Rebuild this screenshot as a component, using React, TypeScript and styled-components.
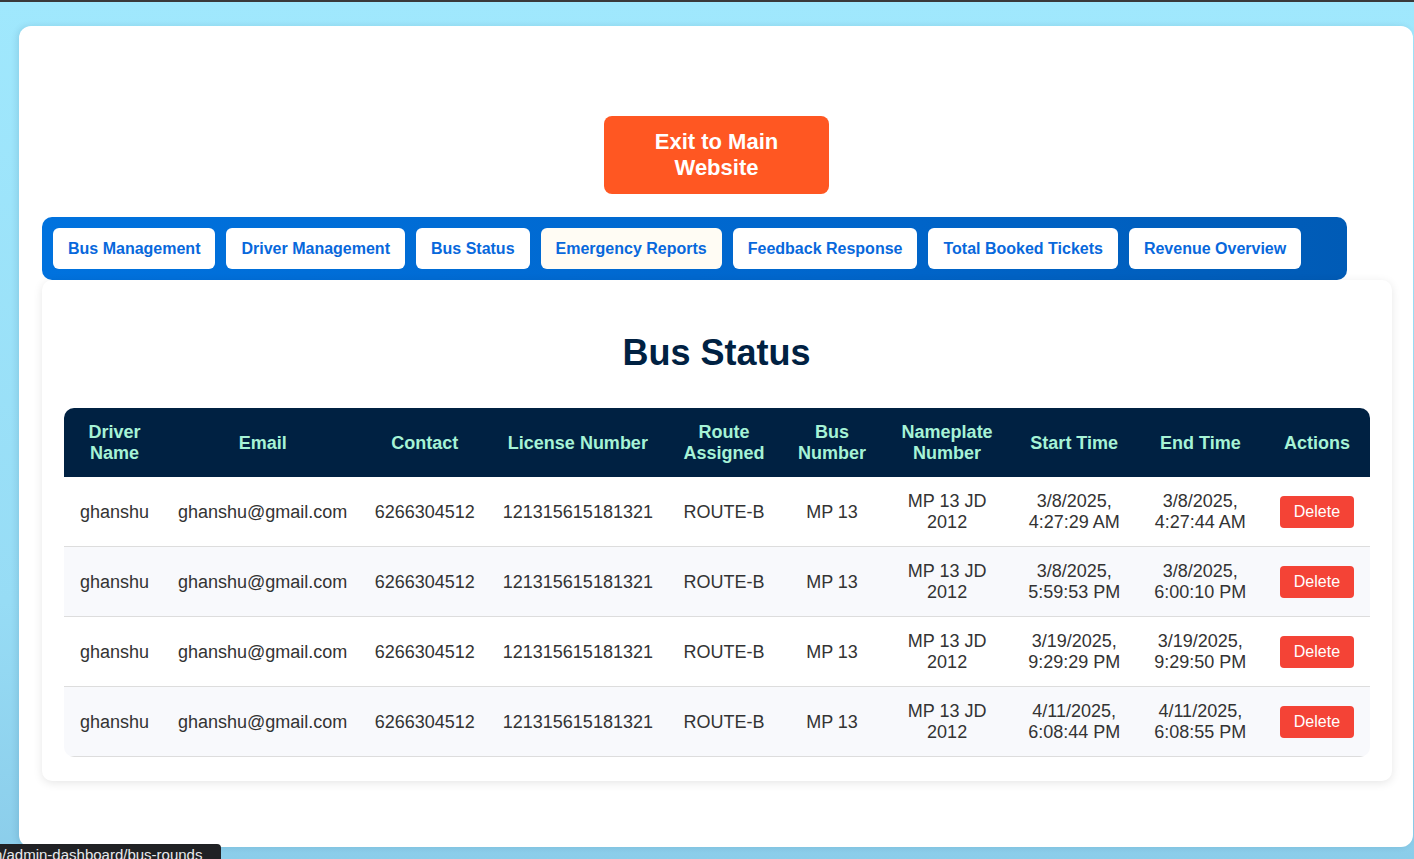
import React from 'react';
import styled, { createGlobalStyle } from 'styled-components';

const GlobalStyle = createGlobalStyle`
	html, body {
		margin: 0;
		padding: 0;
	}
	body {
		font-family: "Liberation Sans", Arial, sans-serif;
		background: linear-gradient(180deg, #a0e8fd 0%, #97dcf5 70%, #8bcdea 100%);
		min-height: 859px;
		border-top: 2px solid #3a3a3a;
		box-sizing: border-box;
	}
`;

const Page = styled.div`
	padding: 24px 1px 12px 19px;
`;

const Panel = styled.div`
	background: #ffffff;
	border-radius: 12px;
	box-shadow: -2px 0 6px rgba(0, 60, 90, 0.12);
	padding: 90px 22px 66px 23px;
	display: flex;
	flex-direction: column;
	align-items: center;
`;

const ExitButton = styled.button`
	width: 225px;
	height: 78px;
	border: none;
	border-radius: 8px;
	background: #ff5722;
	color: #ffffff;
	font-family: inherit;
	font-size: 22px;
	font-weight: bold;
	line-height: 26px;
	cursor: pointer;
	margin-bottom: 23px;
`;

const Nav = styled.nav`
	align-self: flex-start;
	width: 1305px;
	box-sizing: border-box;
	display: flex;
	gap: 11px;
	padding: 11px;
	background: linear-gradient(90deg, #0072de 0%, #0066cc 60%, #005bb6 100%);
	border-radius: 10px;
`;

const NavButton = styled.button<{ $hovered?: boolean }>`
	height: 41px;
	padding: 0 15px;
	border: none;
	border-radius: 6px;
	background: ${p => (p.$hovered ? '#fffcf4' : '#ffffff')};
	color: #0868dc;
	font-family: inherit;
	font-size: 16px;
	font-weight: bold;
	white-space: nowrap;
	cursor: pointer;
`;

const Card = styled.section`
	width: 1350px;
	box-sizing: border-box;
	background: #ffffff;
	border-radius: 10px;
	box-shadow: 0 2px 10px rgba(0, 0, 0, 0.1);
	padding: 0 22px 24px 22px;
`;

const Title = styled.h2`
	margin: 0;
	padding: 52px 0 35px;
	text-align: center;
	font-size: 36px;
	font-weight: bold;
	line-height: 41px;
	color: #002142;
`;

const TableWrap = styled.div`
	border-radius: 10px;
	overflow: hidden;
`;

const Table = styled.table`
	width: 100%;
	border-collapse: collapse;
	table-layout: fixed;
`;

const HeadCell = styled.th`
	background: #002142;
	color: #a6f3d6;
	font-size: 18px;
	font-weight: bold;
	line-height: 21px;
	padding: 14px 10px 13px;
	text-align: center;
`;

const Row = styled.tr<{ $striped?: boolean }>`
	background: ${p => (p.$striped ? '#f8f9fc' : '#ffffff')};
	border-bottom: 1px solid #dddddd;
`;

const Cell = styled.td`
	color: #333333;
	font-size: 18px;
	line-height: 21px;
	padding: 14px 10px 13px;
	text-align: center;
`;

const DeleteButton = styled.button`
	border: none;
	border-radius: 4px;
	background: #f44336;
	color: #ffffff;
	font-family: inherit;
	font-size: 16px;
	line-height: 18px;
	padding: 7px 14px;
	cursor: pointer;
`;

const StatusBubble = styled.div`
	position: fixed;
	left: 0;
	bottom: 0;
	width: 221px;
	height: 15px;
	background: #202124;
	border-top-right-radius: 4px;
	color: #e8eaed;
	font-size: 15px;
	line-height: 22px;
	overflow: hidden;
	white-space: nowrap;
	text-indent: -6px;
`;

const tabs = [
	'Bus Management',
	'Driver Management',
	'Bus Status',
	'Emergency Reports',
	'Feedback Response',
	'Total Booked Tickets',
	'Revenue Overview',
];

const columns: { label: string; width: number }[] = [
	{ label: 'Driver Name', width: 102 },
	{ label: 'Email', width: 194 },
	{ label: 'Contact', width: 130 },
	{ label: 'License Number', width: 176 },
	{ label: 'Route Assigned', width: 116 },
	{ label: 'Bus Number', width: 100 },
	{ label: 'Nameplate Number', width: 130 },
	{ label: 'Start Time', width: 124 },
	{ label: 'End Time', width: 128 },
	{ label: 'Actions', width: 105 },
];

const rounds = [
	{ start: '3/8/2025, 4:27:29 AM', end: '3/8/2025, 4:27:44 AM' },
	{ start: '3/8/2025, 5:59:53 PM', end: '3/8/2025, 6:00:10 PM' },
	{ start: '3/19/2025, 9:29:29 PM', end: '3/19/2025, 9:29:50 PM' },
	{ start: '4/11/2025, 6:08:44 PM', end: '4/11/2025, 6:08:55 PM' },
];

export default function App() {
	return (
		<>
			<GlobalStyle />
			<Page>
				<Panel>
					<ExitButton>Exit to Main Website</ExitButton>
					<Nav>
						{tabs.map(t => (
							<NavButton key={t} $hovered={t === 'Emergency Reports'}>{t}</NavButton>
						))}
					</Nav>
					<Card>
						<Title>Bus Status</Title>
						<TableWrap>
							<Table>
								<colgroup>
									{columns.map(c => <col key={c.label} style={{ width: c.width }} />)}
								</colgroup>
								<thead>
									<tr>
										{columns.map(c => <HeadCell key={c.label}>{c.label}</HeadCell>)}
									</tr>
								</thead>
								<tbody>
									{rounds.map((r, i) => (
										<Row key={i} $striped={i % 2 === 1}>
											<Cell>ghanshu</Cell>
											<Cell>ghanshu@gmail.com</Cell>
											<Cell>6266304512</Cell>
											<Cell>121315615181321</Cell>
											<Cell>ROUTE-B</Cell>
											<Cell>MP 13</Cell>
											<Cell>MP 13 JD 2012</Cell>
											<Cell>{r.start}</Cell>
											<Cell>{r.end}</Cell>
											<Cell><DeleteButton>Delete</DeleteButton></Cell>
										</Row>
									))}
								</tbody>
							</Table>
						</TableWrap>
					</Card>
				</Panel>
			</Page>
			<StatusBubble>n/admin-dashboard/bus-rounds</StatusBubble>
		</>
	);
}
